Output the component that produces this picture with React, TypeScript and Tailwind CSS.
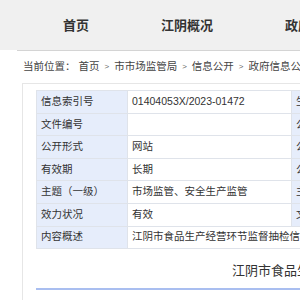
import React from 'react';

const font = { fontFamily: '"Liberation Sans", "Noto Sans CJK SC", sans-serif' };

const navItems = ['首页', '江阴概况', '政府信息公开', '政务服务'];

const crumbs = ['首页', '市市场监管局', '信息公开', '政府信息公开'];

const rows: { label: string; value: string; label2?: string; value2?: string }[] = [
    { label: '信息索引号', value: '01404053X/2023-01472', label2: '生成日期', value2: '2023-11-20' },
    { label: '文件编号', value: '', label2: '公开日期', value2: '2023-11-20' },
    { label: '公开形式', value: '网站', label2: '公开时限', value2: '常规公开' },
    { label: '有效期', value: '长期', label2: '公开范围', value2: '面向社会' },
    { label: '主题（一级）', value: '市场监管、安全生产监管', label2: '主题（二级）', value2: '其他' },
    { label: '效力状况', value: '有效', label2: '文号', value2: '' },
    { label: '内容概述', value: '江阴市食品生产经营环节监督抽检信息公示' },
];

const App: React.FC = () => {
    return (
        <div className="w-[300px] h-[300px] overflow-hidden bg-white text-[#333]" style={font}>
            <div className="w-[900px]">
                {/* top nav */}
                <div className="h-[50px] bg-[#f0f0f0] flex items-center pl-[63px] gap-[72px]">
                    {navItems.map((item) => (
                        <span key={item} className="text-[13px] font-bold leading-none text-[#333]">
                            {item}
                        </span>
                    ))}
                </div>

                <div className="ml-[17px] border-t border-[#d4d4d4]">
                    {/* breadcrumb */}
                    <div className="h-[32px] flex items-center pl-[6px] text-[10.5px] text-[#444]">
                        <span>当前位置：</span>
                        {crumbs.map((c, i) => (
                            <React.Fragment key={c}>
                                {i > 0 && <span className="mx-[5px] text-[8px] text-[#666]">&gt;</span>}
                                <span className={i === 0 ? 'ml-[3px]' : ''}>{c}</span>
                            </React.Fragment>
                        ))}
                    </div>

                    {/* content box */}
                    <div className="ml-[5px] border-l border-t border-[#e6e6e6] pl-[13px] pt-[6px] h-[400px]">
                        <div className="w-[700px] border-t border-l border-[#dfe3ea] text-[10.5px]">
                            {rows.map((r) => (
                                <div key={r.label} className="flex h-[22.6px] border-b border-[#dfe3ea]">
                                    <div className="w-[91px] shrink-0 bg-[#e6edfb] border-r border-[#dfe3ea] flex items-center pl-[4px]">
                                        {r.label}
                                    </div>
                                    {r.label2 !== undefined ? (
                                        <>
                                            <div className="w-[164px] shrink-0 border-r border-[#dfe3ea] flex items-center pl-[4px] whitespace-nowrap">
                                                {r.value}
                                            </div>
                                            <div className="w-[91px] shrink-0 bg-[#e6edfb] border-r border-[#dfe3ea] flex items-center pl-[4px]">
                                                {r.label2}
                                            </div>
                                            <div className="flex-1 flex items-center pl-[4px]">{r.value2}</div>
                                        </>
                                    ) : (
                                        <div className="flex-1 flex items-center pl-[4px] whitespace-nowrap">{r.value}</div>
                                    )}
                                </div>
                            ))}
                        </div>

                        {/* title */}
                        <div className="w-[700px] border-b-2 border-[#a9bef0] pt-[12px] pb-[7px] pl-[196px] text-[13px] leading-[20px]">
                            <span className="text-[#333] whitespace-nowrap">
                                江阴市食品生产经营环节监督抽检信息公示
                            </span>
                        </div>
                    </div>
                </div>
            </div>
        </div>
    );
};

export default App;
